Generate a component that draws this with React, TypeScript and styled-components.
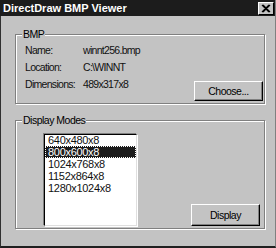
import React from "react";
import styled, {createGlobalStyle} from "styled-components";

const GlobalStyle = createGlobalStyle`
  body {
    margin: 0;
    background: #c0c0c0;
  }
`;

const modes = ["640x480x8", "800x600x8", "1024x768x8", "1152x864x8", "1280x1024x8"];

const App = () => {
    return (
        <>
            <GlobalStyle/>
            <Window>
                <TitleBar>
                    <span>DirectDraw BMP Viewer</span>
                    <CloseButton>
                        <svg width="10" height="9" viewBox="0 0 10 9">
                            <path d="M1 1 L8 8 M2 1 L9 8 M8 1 L1 8 M9 1 L2 8" stroke="#000" strokeWidth="1.2"/>
                        </svg>
                    </CloseButton>
                </TitleBar>
                <Body>
                    <Group>
                        <Legend>BMP</Legend>
                        <BmpContent>
                            <InfoGrid>
                                <Label>Name:</Label>
                                <Value>winnt256.bmp</Value>
                                <Label>Location:</Label>
                                <Value>C:\WINNT</Value>
                                <Label>Dimensions:</Label>
                                <Value>489x317x8</Value>
                            </InfoGrid>
                            <Button>Choose...</Button>
                        </BmpContent>
                    </Group>
                    <Group $spaced>
                        <Legend>Display Modes</Legend>
                        <ModesContent>
                            <ListBox>
                                {modes.map((m, i) => (
                                    <ListItem key={m} $selected={i === 1}>{m}</ListItem>
                                ))}
                            </ListBox>
                            <Button $display>Display</Button>
                        </ModesContent>
                    </Group>
                </Body>
            </Window>
        </>
    )
}

export default App;

const Window = styled.div`
  width: 276px;
  height: 248px;
  box-sizing: border-box;
  background: #c3c3c3;
  border-left: 1px solid #303030;
  border-right: 1px solid #808080;
  border-bottom: 2px solid #202020;
  display: flex;
  flex-direction: column;
  font-family: "Liberation Sans", Arial, sans-serif;
  color: #000;
`;

const TitleBar = styled.div`
  height: 16px;
  flex-shrink: 0;
  background: #1c1c1c;
  color: #fff;
  font-size: 11px;
  font-weight: bold;
  display: flex;
  align-items: center;
  justify-content: space-between;
  padding: 0 1px 0 3px;
  margin-left: -1px;
`;

const CloseButton = styled.div`
  width: 16px;
  height: 13px;
  box-sizing: border-box;
  background: #c3c3c3;
  border-top: 1px solid #fff;
  border-left: 1px solid #fff;
  border-right: 1px solid #000;
  border-bottom: 1px solid #000;
  display: flex;
  align-items: center;
  justify-content: center;
`;

const Body = styled.div`
  padding: 13px 10px 0 14px;
`;

const Group = styled.fieldset<{ $spaced?: boolean }>`
  margin: ${p => p.$spaced ? "11px" : "0"} 0 0 0;
  padding: 0 1px 2px 6px;
  min-width: 0;
  border: 1px solid #808080;
  box-shadow: 1px 1px 0 #fff, inset 1px 1px 0 #fff;
`;

const Legend = styled.legend`
  padding: 0 1px;
  font-size: 10.5px;
  line-height: 11px;
  letter-spacing: -0.5px;
  background: #c3c3c3;
`;

const BmpContent = styled.div`
  height: 61px;
  padding: 2px 0 0 3px;
  box-sizing: border-box;
  display: flex;
  justify-content: space-between;
  align-items: flex-start;
`;

const InfoGrid = styled.div`
  display: grid;
  grid-template-columns: 58px auto;
  grid-auto-rows: 17px;
  font-size: 10.5px;
  line-height: 17px;
  letter-spacing: -0.7px;
`;

const Label = styled.div`
  color: #111;
`;

const Value = styled.div`
  color: #111;
`;

const Button = styled.div<{ $display?: boolean }>`
  align-self: flex-end;
  width: 69px;
  height: ${p => p.$display ? "22px" : "20px"};
  margin-right: ${p => p.$display ? "3px" : "0"};
  box-sizing: border-box;
  background: #c3c3c3;
  border-top: 1px solid #fff;
  border-left: 1px solid #fff;
  border-right: 1px solid #000;
  border-bottom: 1px solid #000;
  box-shadow: inset -1px -1px 0 #808080;
  display: flex;
  align-items: center;
  justify-content: center;
  font-size: 10.5px;
  letter-spacing: -0.5px;
`;

const ModesContent = styled.div`
  padding: 8px 0 0 22px;
  display: flex;
  justify-content: space-between;
`;

const ListBox = styled.div`
  width: 93px;
  height: 92px;
  box-sizing: border-box;
  background: #fff;
  border-top: 1px solid #000;
  border-left: 1px solid #000;
  border-right: 1px solid #dfdfdf;
  border-bottom: 1px solid #dfdfdf;
  box-shadow: -1px -1px 0 #808080, 1px 1px 0 #fff;
  font-size: 11px;
  line-height: 12px;
`;

const ListItem = styled.div<{ $selected?: boolean }>`
  padding-left: 3px;
  margin-top: -1px;
  margin-bottom: 1px;
  height: 12px;
  letter-spacing: -0.3px;
  color: ${p => p.$selected ? "#fff" : "#111"};
  background: ${p => p.$selected ? "#1c1c1c" : "transparent"};
  outline: ${p => p.$selected ? "1px dotted #fff" : "none"};
  outline-offset: -1px;
`;
